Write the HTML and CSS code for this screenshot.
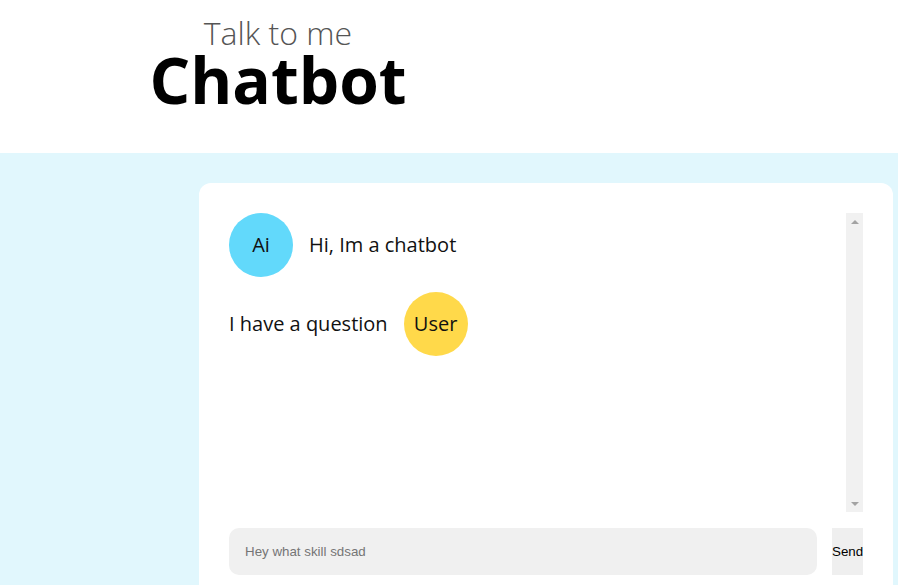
FILE: index.html
```html
<!DOCTYPE html>
<html lang="en">
<head>
<meta charset="utf-8">
<title>Chatbot</title>
<link rel="stylesheet" href="styles.css">
</head>
<body>
<header class="header">
  <div class="title-block">
    <div class="subtitle">Talk to me</div>
    <h1 class="title">Chatbot</h1>
  </div>
</header>
<main class="main">
  <section class="card">
    <div class="chat-area">
      <div class="messages">
        <div class="msg msg-ai">
          <div class="avatar avatar-ai">Ai</div>
          <div class="msg-text">Hi, Im a chatbot</div>
        </div>
        <div class="msg msg-user">
          <div class="msg-text">I have a question</div>
          <div class="avatar avatar-user">User</div>
        </div>
      </div>
      <div class="scrollbar" aria-hidden="true">
        <div class="scroll-btn"><span class="arrow-up"></span></div>
        <div class="scroll-track"></div>
        <div class="scroll-btn"><span class="arrow-down"></span></div>
      </div>
    </div>
    <form class="composer">
      <input class="composer-input" type="text" placeholder="Hey what skill sdsad">
      <button class="composer-send" type="button">Send</button>
    </form>
  </section>
</main>
</body>
</html>
```
FILE: styles.css
```css
html, body {
  margin: 0;
  padding: 0;
  height: 100%;
  overflow: hidden;
}
body {
  font-family: "Open Sans", sans-serif;
  background: #e1f7fd;
}
.header {
  height: 153px;
  background: #ffffff;
  box-sizing: border-box;
  padding-top: 12px;
}
.title-block {
  width: 556px;
  text-align: center;
}
.subtitle {
  font-size: 32px;
  font-weight: 300;
  color: #555555;
  line-height: 42px;
}
.title {
  margin: 0;
  font-size: 64px;
  font-weight: 700;
  color: #000000;
  line-height: 52px;
}
.main {
  padding-top: 30px;
  padding-left: 199px;
}
.card {
  width: 694px;
  box-sizing: border-box;
  background: #ffffff;
  border-radius: 12px;
  padding: 30px;
}
.chat-area {
  display: flex;
  height: 299px;
}
.messages {
  flex: 1;
  overflow: hidden;
  display: flex;
  flex-direction: column;
  gap: 15px;
}
.msg {
  display: flex;
  align-items: center;
  gap: 16px;
}
.msg-text {
  font-size: 20px;
  color: #111111;
  line-height: 26px;
  margin-top: -1px;
}
.avatar {
  width: 64px;
  height: 64px;
  border-radius: 50%;
  display: flex;
  align-items: center;
  justify-content: center;
  font-size: 20px;
  line-height: 26px;
  color: #111111;
  flex-shrink: 0;
}
.avatar-ai {
  background: #62d9fb;
}
.avatar-user {
  background: #ffd94a;
}
.scrollbar {
  width: 17px;
  background: #f1f1f1;
  display: flex;
  flex-direction: column;
}
.scroll-btn {
  height: 17px;
  display: flex;
  align-items: center;
  justify-content: center;
}
.scroll-track {
  flex: 1;
}
.arrow-up {
  width: 0;
  height: 0;
  border-left: 4px solid transparent;
  border-right: 4px solid transparent;
  border-bottom: 4px solid #a3a3a3;
}
.arrow-down {
  width: 0;
  height: 0;
  border-left: 4px solid transparent;
  border-right: 4px solid transparent;
  border-top: 4px solid #a3a3a3;
}
.composer {
  display: flex;
  gap: 15px;
  margin: 16px 0 0 0;
  height: 47px;
}
.composer-input {
  flex: 1;
  border: 0;
  outline: none;
  background: #f0f0f0;
  border-radius: 10px;
  padding: 0 16px;
  font-family: "Liberation Sans", Arial, sans-serif;
  font-size: 13.333px;
  color: #222;
}
.composer-input::placeholder {
  color: #757575;
}
.composer-send {
  width: 31px;
  padding: 0;
  border: 0;
  background: #efefef;
  font-family: "Liberation Sans", Arial, sans-serif;
  font-size: 13.333px;
  color: #000;
  text-align: left;
  white-space: nowrap;
  overflow: visible;
}
```
